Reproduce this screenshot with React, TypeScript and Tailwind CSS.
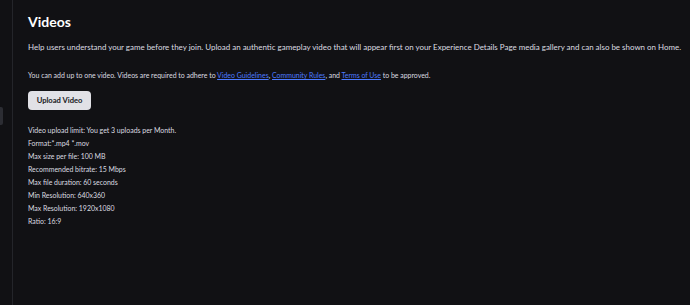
import React from "react";

export default function App() {
  const specs = [
    "Video upload limit: You get 3 uploads per Month.",
    "Format:*.mp4 *.mov",
    "Max size per file: 100 MB",
    "Recommended bitrate: 15 Mbps",
    "Max file duration: 60 seconds",
    "Min Resolution: 640x360",
    "Max Resolution: 1920x1080",
    "Ratio: 16:9",
  ];
  return (
    <div
      className="flex w-[690px] h-[305px] bg-[#111114] overflow-hidden"
      style={{ fontFamily: "Lato, 'Noto Sans', sans-serif" }}
    >
      <div className="relative w-[13px] shrink-0 border-r border-[#24252a]">
        <div className="absolute left-0 top-[107px] w-[3px] h-[18px] rounded-r-[2px] bg-[#2c2d33]" />
      </div>
      <div className="flex-1 pl-[15px] pt-[12px]">
        <h1 className="text-[14px] leading-[20px] font-bold text-white">Videos</h1>
        <p className="mt-[9px] text-[7.95px] leading-[12px] text-[#dcdce0] whitespace-nowrap">
          Help users understand your game before they join. Upload an authentic gameplay video that will appear first on your Experience Details Page media gallery and can also be shown on Home.
        </p>
        <p className="mt-[17px] text-[6.95px] leading-[10px] text-[#dcdce0] whitespace-nowrap">
          You can add up to one video. Videos are required to adhere to{" "}
          <span className="text-[#4d7bff] underline">Video Guidelines</span>,{" "}
          <span className="text-[#4d7bff] underline">Community Rules</span>, and{" "}
          <span className="text-[#4d7bff] underline">Terms of Use</span> to be approved.
        </p>
        <button className="mt-[11px] w-[63px] h-[19px] rounded-[4px] bg-[#e1e1e6] text-[#16171b] text-[7.6px] font-bold flex items-center justify-center">
          Upload Video
        </button>
        <div className="mt-[15px] flex flex-col gap-[3px]">
          {specs.map((s) => (
            <div key={s} className="text-[6.95px] leading-[10px] text-[#dcdce0] whitespace-nowrap">
              {s}
            </div>
          ))}
        </div>
      </div>
    </div>
  );
}
